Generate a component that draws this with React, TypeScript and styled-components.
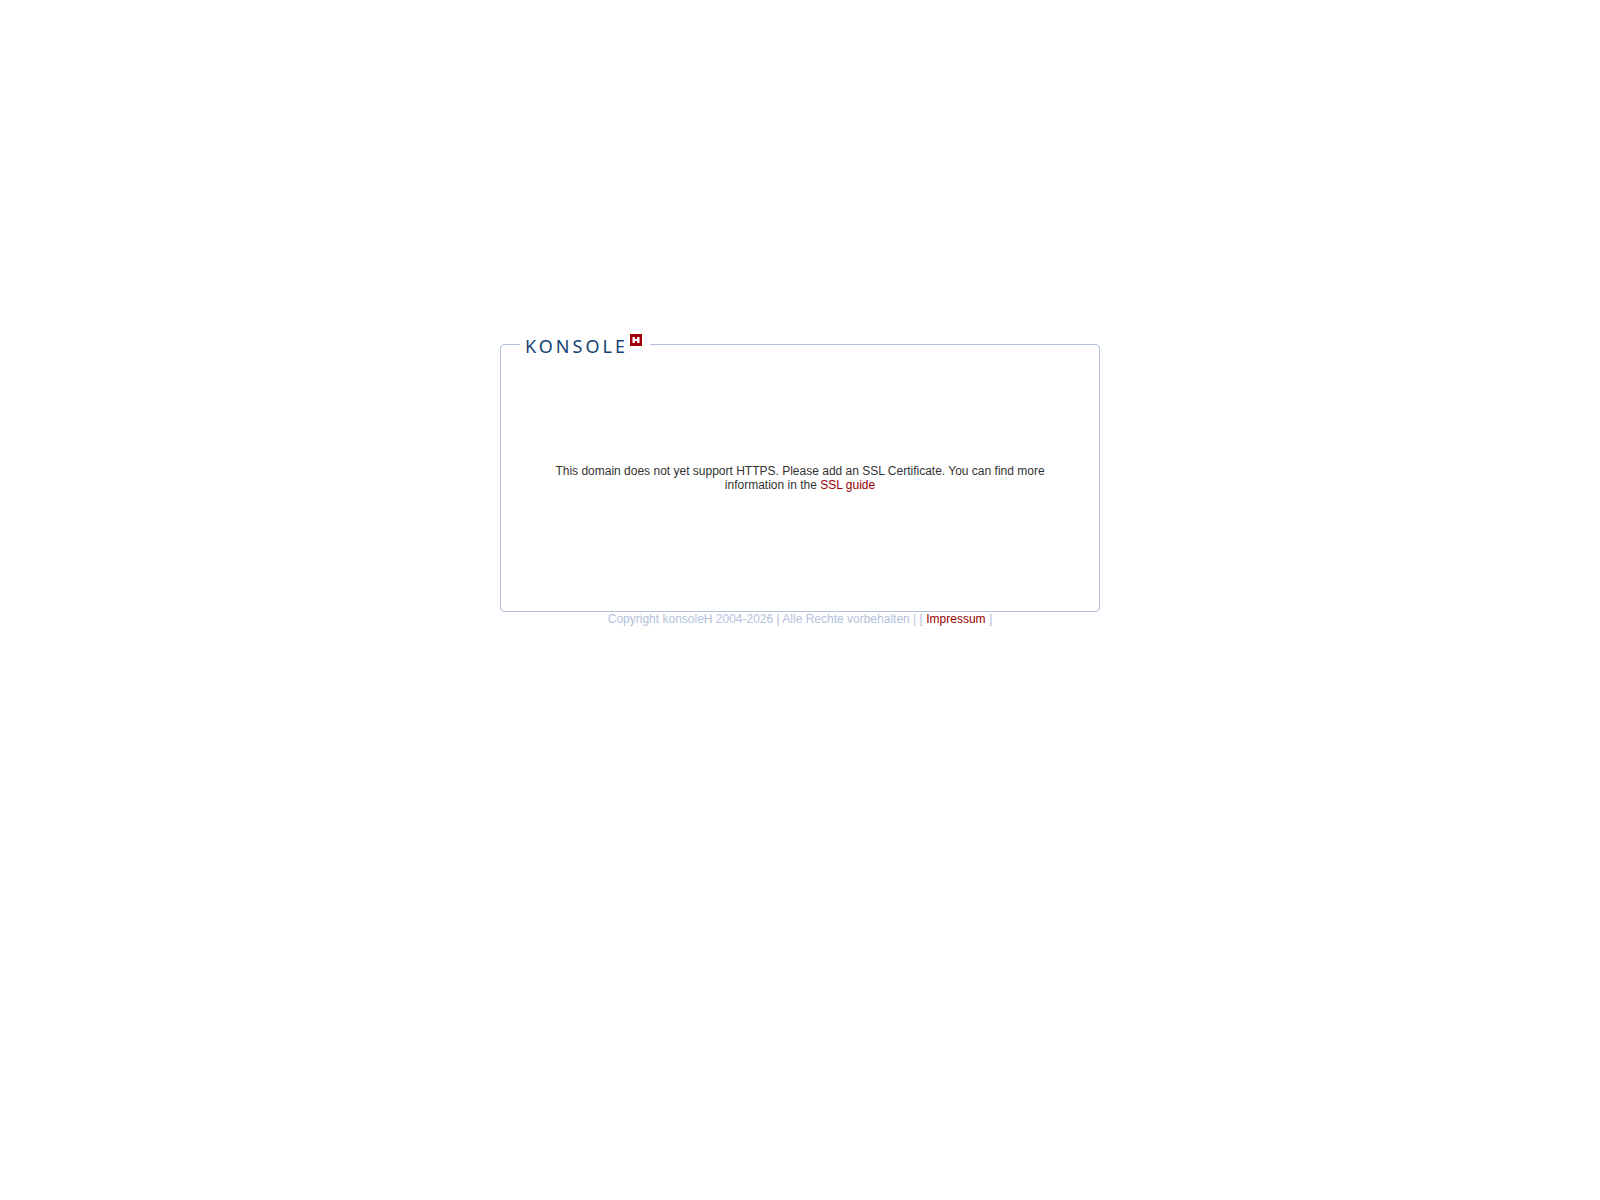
import React from "react";
import styled, { createGlobalStyle } from "styled-components";

const GlobalStyle = createGlobalStyle`
  body {
    margin: 0;
    background: #ffffff;
    color: #333333;
    font: 12px/14px "Liberation Sans", Arial, Helvetica, sans-serif;
  }
`;

const Page = styled.div`
  display: flex;
  flex-direction: column;
  align-items: center;
  padding: 334px 16px 16px;
`;

const Panel = styled.fieldset`
  box-sizing: border-box;
  width: 100%;
  max-width: 600px;
  min-width: 0;
  margin: 0;
  padding: 0 19px 10px;
  border: 1px solid #b3c1db;
  border-radius: 4px;
`;

const Brand = styled.legend`
  display: block;
  height: 20px;
  padding: 0 8px 0 6px;
`;

const Logo = styled.svg`
  display: block;
  width: 116px;
  height: 20px;
  overflow: visible;
`;

const Wordmark = styled.text`
  fill: #164273;
  font-family: "Noto Sans", "Open Sans", sans-serif;
  font-size: 18px;
  letter-spacing: 3px;
`;

const Message = styled.div`
  display: flex;
  flex-direction: column;
  justify-content: center;
  min-height: 247px;
  padding: 0 30px;
  text-align: center;
`;

const Notice = styled.p`
  margin: 0;
`;

const Footer = styled.footer`
  color: #b3c1db;
  text-align: center;
`;

const Link = styled.a`
  color: #990000;
  text-decoration: none;
`;

function KonsoleLogo() {
  return (
    <Logo viewBox="0 0 116 20" role="img" aria-label="konsoleH">
      <Wordmark x="-1" y="19">KONSOLE</Wordmark>
      <rect x="104" y="0" width="12" height="12" fill="#a00008" />
      <path d="M106.5 3h2.4v2h2.2v-2h2.4v6h-2.4v-2h-2.2v2h-2.4z" fill="#ffffff" />
    </Logo>
  );
}

export default function App() {
  return (
    <>
      <GlobalStyle />
      <Page>
        <Panel>
          <Brand>
            <KonsoleLogo />
          </Brand>
          <Message>
            <Notice>
              This domain does not yet support HTTPS. Please add an SSL Certificate. You can find more
              information in the <Link href="#ssl-guide">SSL guide</Link>
            </Notice>
          </Message>
        </Panel>
        <Footer>
          Copyright konsoleH 2004-2026 | Alle Rechte vorbehalten | [ <Link href="#impressum">Impressum</Link> ]
        </Footer>
      </Page>
    </>
  );
}
